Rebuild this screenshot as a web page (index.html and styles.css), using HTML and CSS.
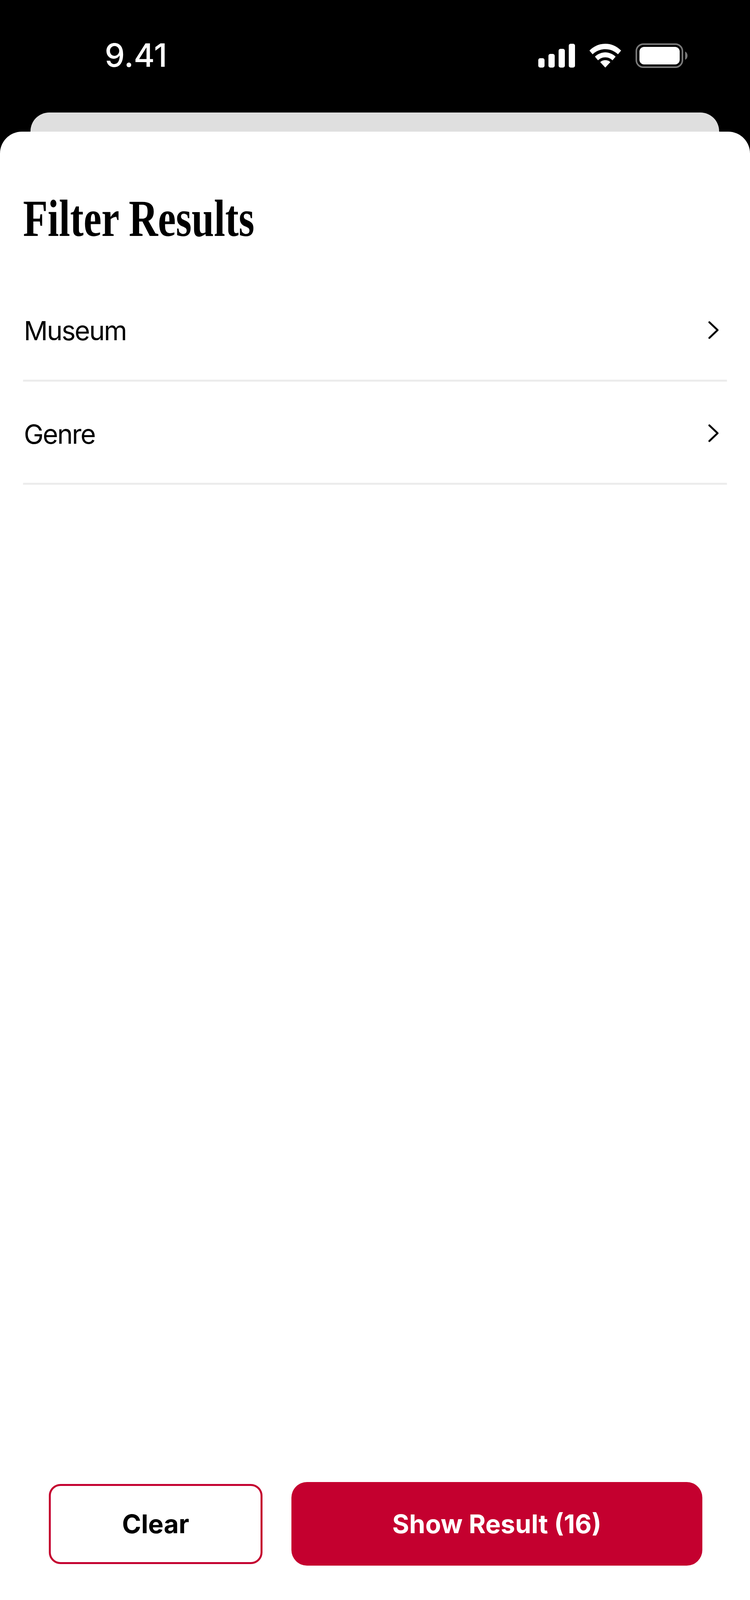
FILE: index.html
```html
<!DOCTYPE html>
<html lang="en">
<head>
    <meta charset="UTF-8">
    <meta name="viewport" content="width=device-width, initial-scale=1.0">
    <title>Filter Results</title>
    <link rel="stylesheet" href="styles.css">
</head>
<body>
    <div class="phone">
        <!-- Status Bar -->
        <div class="status-bar">
            <span class="time">9.41</span>
            <div class="status-icons">
                <svg class="signal" width="94" height="61" viewBox="0 0 94 61" fill="#fff">
                    <rect x="0" y="37" width="16" height="24" rx="5"/>
                    <rect x="26" y="26" width="16" height="35" rx="5"/>
                    <rect x="52" y="13" width="16" height="48" rx="5"/>
                    <rect x="78" y="0" width="16" height="61" rx="5"/>
                </svg>
                <svg class="wifi" width="81" height="61" viewBox="0 0 81 61" fill="#fff">
                    <path d="M40.5 0C25 0 11 6 0 17.5L8 27C17 18.5 28 14 40.5 14C53 14 64 18.5 73 27L81 17.5C70 6 56 0 40.5 0Z"/>
                    <path d="M40.5 22C31 22 21.5 26 14 33L22 42.5C27 37.5 33.5 34.8 40.5 34.8C47.5 34.8 54 37.5 59 42.5L67 33C59.5 26 50 22 40.5 22Z"/>
                    <path d="M40.5 42C35.5 42 31 43.8 27.5 47L40.5 61L53.5 47C50 43.8 45.5 42 40.5 42Z"/>
                </svg>
                <svg class="battery" width="133" height="63" viewBox="0 0 133 63">
                    <rect x="2" y="2" width="118" height="59" rx="18" fill="none" stroke="#7a7a7a" stroke-width="4"/>
                    <rect x="10" y="9" width="103" height="45" rx="12" fill="#fff"/>
                    <path d="M127 21C130.5 22.5 133 26.5 133 31.5C133 36.5 130.5 40.5 127 42Z" fill="#7a7a7a"/>
                </svg>
            </div>
        </div>

        <!-- Sheet behind the filter sheet -->
        <div class="back-sheet"></div>

        <!-- Filter Sheet -->
        <div class="sheet">
            <h1><span>Filter Results</span></h1>

            <div class="filter-row">
                <span>Museum</span>
                <svg class="chevron" width="29" height="48" viewBox="0 0 29 48" fill="none">
                    <path d="M5 4L26 24L5 44" stroke="#000" stroke-width="5" stroke-linecap="round" stroke-linejoin="round"/>
                </svg>
            </div>
            <div class="filter-row">
                <span>Genre</span>
                <svg class="chevron" width="29" height="48" viewBox="0 0 29 48" fill="none">
                    <path d="M5 4L26 24L5 44" stroke="#000" stroke-width="5" stroke-linecap="round" stroke-linejoin="round"/>
                </svg>
            </div>

            <div class="actions">
                <button class="btn-clear" type="button">Clear</button>
                <button class="btn-show" type="button">Show Result (16)</button>
            </div>

            <div class="home-bar"></div>
        </div>
    </div>
</body>
</html>
```
FILE: styles.css
```css
* {
    margin: 0;
    padding: 0;
    box-sizing: border-box;
}

body {
    background: #000;
    font-family: 'Inter', sans-serif;
}

.phone {
    width: 1920px;
    height: 4162px;
    display: flex;
    flex-direction: column;
    background: #000;
}

.status-bar {
    height: 288px;
    display: flex;
    justify-content: space-between;
    align-items: flex-start;
    padding: 111px 160px 0 268px;
    flex-shrink: 0;
}

.time {
    color: #fff;
    font-size: 82px;
    font-weight: 500;
    line-height: 62px;
}

.status-icons {
    display: flex;
    align-items: flex-start;
    gap: 37px;
}

.status-icons .signal,
.status-icons .wifi {
    margin-top: 1px;
}

.back-sheet {
    height: 49px;
    margin: 0 79px 0 78px;
    background: #dfdfdf;
    border-radius: 48px 48px 0 0;
    flex-shrink: 0;
}

.sheet {
    flex: 1;
    display: flex;
    flex-direction: column;
    background: #fff;
    border-radius: 56px 56px 0 0;
    padding: 0 59px;
}

h1 {
    margin-top: 168px;
    height: 108px;
    margin-bottom: 99px;
    font-family: 'Liberation Serif', serif;
    font-size: 133px;
    line-height: 108px;
    font-weight: 700;
    color: #000;
    white-space: nowrap;
}

h1 span {
    display: inline-block;
    transform: scaleX(0.777);
    transform-origin: left center;
}

.filter-row {
    height: 264px;
    display: flex;
    justify-content: space-between;
    align-items: center;
    padding: 8px 21px 0 2px;
    border-bottom: 5px solid #ececec;
    font-size: 68px;
    letter-spacing: -2.5px;
    color: #000;
}

.filter-row:first-of-type {
    height: 265px;
}

.chevron {
    margin-bottom: 3px;
}

.actions {
    margin-top: auto;
    display: flex;
    align-items: center;
    gap: 74px;
    padding: 0 63px 0 66px;
}

.actions button {
    font-family: 'Inter', sans-serif;
    font-size: 66px;
    font-weight: 700;
    cursor: pointer;
}

.btn-clear {
    width: 547px;
    height: 205px;
    background: #fff;
    color: #000;
    border: 5px solid #c4002f;
    border-radius: 30px;
}

.btn-show {
    flex: 1;
    height: 214px;
    background: #c4002f;
    color: #fff;
    border: none;
    border-radius: 40px;
}

.home-bar {
    width: 685px;
    height: 24px;
    margin: 93px 0 37px 560px;
    background: #000;
    border-radius: 12px;
}
```
